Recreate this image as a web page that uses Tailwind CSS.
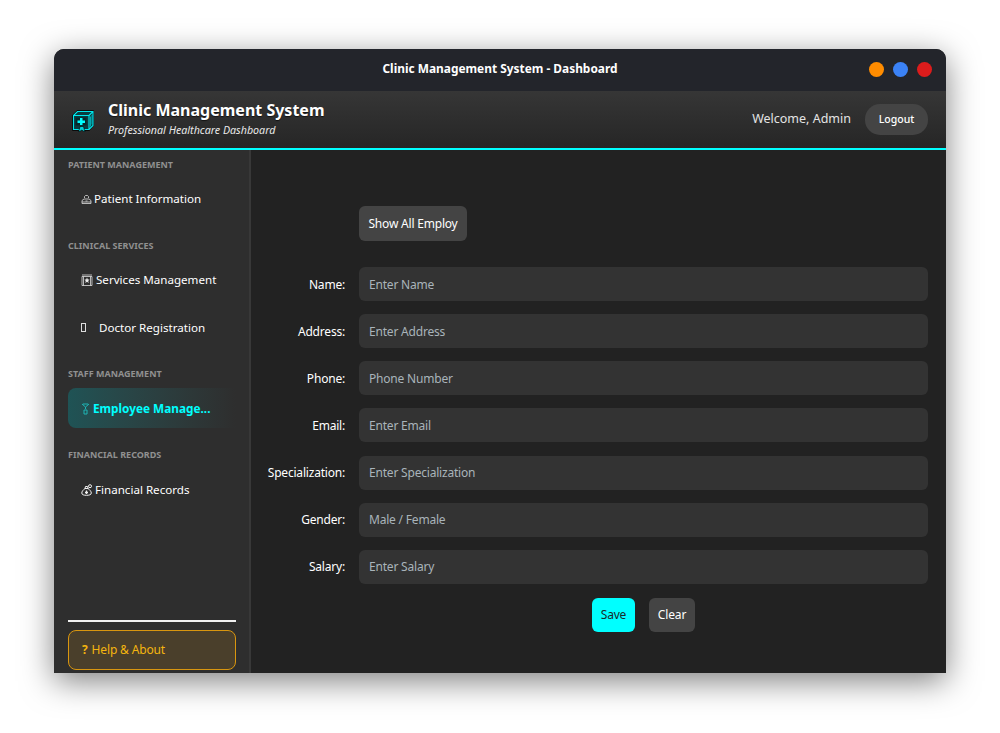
<!DOCTYPE html>
<html lang="en">

<head>
    <meta charset="UTF-8">
    <title>Clinic Management System - Dashboard</title>
    <script src="https://cdn.jsdelivr.net/npm/@tailwindcss/browser@4"></script>
</head>

<body class="bg-white font-['Noto_Sans',sans-serif] w-[1000px] h-[733px] overflow-hidden">
    <div class="ml-[54px] mt-[49px] w-[892px] h-[624px] flex flex-col rounded-t-[10px] overflow-hidden bg-[#222222] shadow-[0_8px_32px_rgba(0,0,0,0.5)]">
        <!-- Title bar -->
        <div class="h-[42px] shrink-0 relative flex items-center justify-center pb-[2px] bg-[#23252b]">
            <span class="text-[11.900px] font-bold text-white">Clinic Management System - Dashboard</span>
            <div class="absolute right-[14px] top-[13px] flex gap-[9px]">
                <span class="w-[15px] h-[15px] rounded-full bg-[#ff8c00]"></span>
                <span class="w-[15px] h-[15px] rounded-full bg-[#3b82f6]"></span>
                <span class="w-[15px] h-[15px] rounded-full bg-[#dc1c1c]"></span>
            </div>
        </div>

        <!-- Header -->
        <div class="h-[59px] shrink-0 flex items-center pl-[18px] pr-[18px] border-b-2 border-[#00ffff] bg-gradient-to-b from-[#363636] to-[#262626]">
            <svg width="22" height="22" viewBox="0 0 22 22" fill="none" class="mr-[14px] mt-[3px]">
                <path d="M1 5.500L5.500 1H21v14.500L17 20H1z" fill="#000" stroke="#000" stroke-width="1.500" />
                <path d="M1.500 5.500h15.500v14H1.500zM1.500 5.500l4-4h15.500v14l-4 4M17 5.500l4-4" fill="#0a3c40" stroke="#00e6ec" stroke-width="1.100" />
                <path d="M3.500 7.500h11v8h-11z" fill="#04282b" />
                <path d="M8 8h2.500v2.500H13V13h-2.500v2H8v-2H5.500v-2.500H8z" fill="#00ffff" />
                <path d="M18.500 6.500v10M20 5v9.500" stroke="#00c4cc" stroke-width="0.800" />
                <path d="M6.500 22l1.500-5.500h3.500L13 22l-3.200-1.800z" fill="#00d0d6" stroke="#000" stroke-width="0.600" />
            </svg>
            <div class="flex flex-col">
                <span class="text-[16px] leading-[21px] pb-[1px] -mt-[1px] font-bold text-white [text-shadow:0_1px_1px_rgba(0,0,0,0.6)]">Clinic Management System</span>
                <span class="text-[10.700px] leading-[16px] italic text-[#e8e8e8]">Professional Healthcare Dashboard</span>
            </div>
            <span class="ml-auto text-[12.500px] text-[#e4e4e4]">Welcome, Admin</span>
            <button class="ml-[14px] w-[63px] h-[31px] rounded-[15px] bg-[#444444] text-[10.500px] font-medium text-white">Logout</button>
        </div>

        <div class="flex-1 flex min-h-0">
            <!-- Sidebar -->
            <aside class="w-[197px] shrink-0 flex flex-col pl-[14px] pr-[13px] pt-[6px] pb-[3px] bg-[#2e2e2e] border-r-2 border-[#383838]">
                <div class="h-4 pt-[2px] flex items-center text-[9px] font-bold uppercase text-[#909090]">Patient Management</div>
                <div class="h-10 mt-[7px] flex items-center pl-[13px] text-[11.600px] text-white">
                    <svg width="11" height="11" viewBox="0 0 11 11" fill="none" stroke="#ddd" stroke-width="0.800" class="mr-[2px]">
                        <path d="M3.500 4V2.500l1-1h2l1 1V4M1 9.500V6.500l2-1.500h5l2 1.500v3zM1 8h9M4.500 7h2" />
                    </svg>
                    Patient Information
                </div>
                <div class="h-4 pt-[2px] mt-[18px] flex items-center text-[9px] font-bold uppercase text-[#909090]">Clinical Services</div>
                <div class="h-10 mt-[7px] flex items-center pl-[13px] text-[11.600px] text-white">
                    <svg width="12" height="12" viewBox="0 0 12 12" fill="none" stroke="#ddd" stroke-width="0.800" class="mr-[3px]">
                        <path d="M1 2.500h10v9H1zM2.500 2.500v9M9.500 2.500v9M1 1h10" />
                        <path d="M6 3.500l.8 2h1.700L7.200 7l.5 2L6 7.800 4.300 9l.5-2-1.300-1.500h1.700z" fill="#eee" stroke="none" />
                    </svg>
                    Services Management
                </div>
                <div class="h-10 mt-[7px] pt-[1px] flex items-center pl-[13px] text-[11.600px] text-white">
                    <span class="w-[5px] h-[9px] border border-[#ddd] mr-[13px]"></span>
                    Doctor Registration
                </div>
                <div class="h-4 pt-[2px] mt-[18px] flex items-center text-[9px] font-bold uppercase text-[#909090]">Staff Management</div>
                <div class="h-10 mt-[7px] pt-[2px] flex items-center pl-[13px] rounded-l-[8px] bg-gradient-to-r from-[#1f5355] to-[#2e2e2e] text-[11.800px] font-bold text-[#00ffff]">
                    <svg width="9" height="12" viewBox="0 0 9 12" fill="none" stroke="#1fb5b5" stroke-width="1" class="mr-[3px]">
                        <path d="M1 1l3.500 3L8 1M2 1h5M4.500 4v2M3 7h3v4H3z" />
                    </svg>
                    Employee Manage...
                </div>
                <div class="h-4 pt-[2px] mt-[18px] flex items-center text-[9px] font-bold uppercase text-[#909090]">Financial Records</div>
                <div class="h-10 mt-[7px] pt-[2px] flex items-center pl-[13px] text-[11.600px] text-white">
                    <svg width="12" height="12" viewBox="0 0 12 12" fill="none" stroke="#f2f2f2" stroke-width="1" class="mr-[2px]">
                        <path d="M4 4.500h3L6.500 2.500h-2zM4 4.500C2 6 .8 7.500 .8 9c0 1.800 2 2.300 4.700 2.300s4.800-.5 4.800-2.300c0-1.500-1.300-3-3.300-4.500" />
                        <path d="M5.500 6.500v3.500M4 8.500h3" stroke-width="1.300" />
                        <circle cx="9" cy="2.200" r="1.500" />
                    </svg>
                    Financial Records
                </div>
                <div class="mt-auto h-[2px] bg-[#f0f0f0]"></div>
                <button class="mt-[8px] h-10 flex items-center pl-[13px] rounded-[8px] border border-[#d9960f] bg-[#4a3f2b] text-[12px] tracking-[-0.15px] text-[#f5b50f]">
                    <span class="font-bold mr-[4px]">?</span>Help &amp; About
                </button>
            </aside>

            <!-- Employee form -->
            <main class="flex-1 pt-[56px] pr-[18px] bg-[#222222]">
                <div class="pl-[108px]">
                    <button class="w-[108px] h-[35px] rounded-[6px] bg-[#444444] text-[12px] tracking-[-0.2px] text-white">Show All Employ</button>
                </div>
                <div class="mt-[26px] flex flex-col gap-[13.150px] text-[12px] tracking-[-0.2px]">
                    <div class="flex items-center gap-[14px]">
                        <label class="w-[94px] pt-[1px] text-right text-white">Name:</label>
                        <input placeholder="Enter Name" class="flex-1 h-[34px] px-[10px] rounded-[6px] bg-[#333333] placeholder:text-[#a9b4ba]">
                    </div>
                    <div class="flex items-center gap-[14px]">
                        <label class="w-[94px] pt-[1px] text-right text-white">Address:</label>
                        <input placeholder="Enter Address" class="flex-1 h-[34px] px-[10px] rounded-[6px] bg-[#333333] placeholder:text-[#a9b4ba]">
                    </div>
                    <div class="flex items-center gap-[14px]">
                        <label class="w-[94px] pt-[1px] text-right text-white">Phone:</label>
                        <input placeholder="Phone Number" class="flex-1 h-[34px] px-[10px] rounded-[6px] bg-[#333333] placeholder:text-[#a9b4ba]">
                    </div>
                    <div class="flex items-center gap-[14px]">
                        <label class="w-[94px] pt-[1px] text-right text-white">Email:</label>
                        <input placeholder="Enter Email" class="flex-1 h-[34px] px-[10px] rounded-[6px] bg-[#333333] placeholder:text-[#a9b4ba]">
                    </div>
                    <div class="flex items-center gap-[14px]">
                        <label class="w-[94px] pt-[1px] text-right text-white">Specialization:</label>
                        <input placeholder="Enter Specialization" class="flex-1 h-[34px] px-[10px] rounded-[6px] bg-[#333333] placeholder:text-[#a9b4ba]">
                    </div>
                    <div class="flex items-center gap-[14px]">
                        <label class="w-[94px] pt-[1px] text-right text-white">Gender:</label>
                        <input placeholder="Male / Female" class="flex-1 h-[34px] px-[10px] rounded-[6px] bg-[#333333] placeholder:text-[#a9b4ba]">
                    </div>
                    <div class="flex items-center gap-[14px]">
                        <label class="w-[94px] pt-[1px] text-right text-white">Salary:</label>
                        <input placeholder="Enter Salary" class="flex-1 h-[34px] px-[10px] rounded-[6px] bg-[#333333] placeholder:text-[#a9b4ba]">
                    </div>
                </div>
                <div class="mt-[14px] pl-[108px] flex justify-center gap-[14px]">
                    <button class="w-[43px] h-[34px] rounded-[6px] bg-[#00ffff] text-[12px] tracking-[-0.2px] text-[#1a2a2a]">Save</button>
                    <button class="w-[46px] h-[34px] rounded-[6px] bg-[#444444] text-[12px] tracking-[-0.1px] text-white">Clear</button>
                </div>
            </main>
        </div>
    </div>
</body>

</html>
